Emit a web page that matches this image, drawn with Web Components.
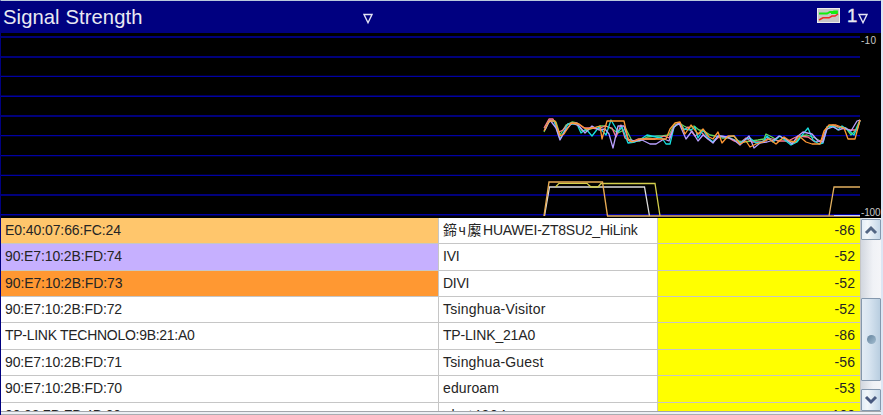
<!DOCTYPE html>
<html lang="en"><head><meta charset="utf-8"><title>Signal Strength</title>
<style>html,body{margin:0;width:883px;height:415px;overflow:hidden;background:#dce6f4;font-family:"Liberation Sans","Noto Sans CJK SC",sans-serif}</style></head>
<body><signal-monitor></signal-monitor>
<script>
class FitText extends HTMLElement{
 connectedCallback(){
  const r=this.attachShadow({mode:'open'});
  r.innerHTML='<style>:host{display:inline-block;white-space:nowrap}span{display:inline-block}</style><span><slot></slot></span>';
  const s=r.querySelector('span'),w=+this.getAttribute('w');
  if(w)s.style.letterSpacing=((w-s.getBoundingClientRect().width)/this.textContent.length)+'px';
 }
}
class SignalTitle extends HTMLElement{
 constructor(){super();this.attachShadow({mode:'open'}).innerHTML=`
 <style>:host{display:grid;grid-template-columns:360px 1fr auto;align-items:start;height:32px;background:#000080;color:#e9e9f2;padding:0 13px 0 2px;box-sizing:border-box;font-size:20.2px;line-height:32px}
 .mark{padding-top:12px;display:block}.tools{display:flex}.g{margin:7px 7px 0 0}.n{font-size:18.5px;line-height:29px;-webkit-text-stroke:.4px #e9e9f2;width:9px}.d{margin:12px 0 0 2px}
 svg{display:block}</style>
 <fit-text w="139.5">Signal Strength</fit-text>
 <span class="mark"><svg width="10" height="12"><path d="M1 1.5H9L5 9.7Z" fill="none" stroke="#e4e4f4" stroke-width="1.4"/></svg></span>
 <span class="tools"><svg class="g" width="23" height="15"><rect x=".5" y=".5" width="22" height="14" fill="#c6c6c6" stroke="#ececec"/><path d="M2 5.5H10L13 4H16L17 3.4H20L20 5H14" fill="none" stroke="#10ee10" stroke-width="1.8"/><path d="M2 12L6 9.8H12L15 8H18L21 6" fill="none" stroke="#f02828" stroke-width="1.5"/></svg>
 <span class="n">1</span><svg class="d" width="10" height="12"><path d="M1 1.5H9L5 9.7Z" fill="none" stroke="#e4e4f4" stroke-width="1.4"/></svg></span>`}
}
class SignalChart extends HTMLElement{
 constructor(){super();
 const grid=[37,57,76.4,96.3,116,135.6,155.6,175.4,195,214.8].map(y=>`<path d="M0 ${y}H860" stroke="#0000a4" stroke-width="1.4"/>`).join('');
 const L=(c,p)=>`<polyline points="${p}" fill="none" stroke="${c}" stroke-width="1.3"/>`;
 this.attachShadow({mode:'open'}).innerHTML=`<style>:host{display:block;height:185px;background:#000}svg{display:block}text{font-size:10px;fill:#c8c8c8}</style>
 <svg width="880" height="185" viewBox="1 33 880 185">${grid}
 <g stroke-linejoin="round">
 ${L('#60d860','544,132 548,123 552,120 556,122 560,135 566,125 572,122 577,123 582,131 588,130 594,128 600,126 606,126 612,129 618,133 626,129 632,141 640,141 647,137 657,136 662,136 669,135 674,125 679,123 684,126 688,128 694,126 699,130 704,131 710,135 715,136 722,138 730,138 738,141 744,142 751,141 758,140 764,139 766,134 772,137 778,141 784,138 791,143 796,142 801,136 807,135 815,138 822,142 826,130 832,126 838,127 846,128 851,135 855,131 860,120')}
 ${L('#ff7890','544,128 549,119 553,119 559,132 563,130 568,124 577,123 584,128 592,128 598,129 605,126 612,128 616,137 621,125 625,138 631,142 638,139 646,139 655,139 664,136 669,138 674,127 679,123 684,130 688,127 695,136 701,132 708,139 713,142 720,136 727,137 734,141 740,143 746,138 752,142 761,142 769,138 778,141 788,141 798,136 808,137 815,142 822,140 827,127 833,125 841,128 850,130 857,130 860,120')}
 ${L('#18dfdf','545,129 549,121 554,121 560,139 568,124 577,124 581,133 586,129 592,136 599,127 606,135 611,120 618,132 622,127 628,143 635,142 641,139 647,135 656,137 662,138 666,144 670,144 674,127 680,123 684,129 691,130 695,127 698,138 703,130 708,138 713,142 718,136 727,137 734,136 740,143 746,139 750,138 756,143 763,142 767,136 773,142 780,136 786,141 791,145 797,142 803,134 808,128 813,140 819,144 823,143 827,127 833,126 838,130 842,126 848,130 854,135 860,121')}
 ${L('#b8a0ff','545,130 550,120 556,128 560,140 565,131 572,123 579,126 585,133 592,126 599,130 605,129 609,134 613,148 618,126 624,126 628,139 635,141 642,140 650,144 656,144 664,139 669,141 674,127 679,123 686,139 692,131 698,141 703,135 708,139 713,143 718,136 727,137 734,140 740,145 744,141 749,136 754,148 760,143 767,142 774,140 779,136 786,139 792,144 798,136 803,132 812,134 818,141 823,142 827,129 833,127 839,130 845,128 851,131 857,121 860,120')}
 ${L('#ff9834','544,131 549,121 555,121 560,136 564,134 571,123 579,124 586,129 593,128 600,126 602,139 607,121 624,121 628,139 632,142 640,139 650,139 660,139 666,139 670,129 675,123 680,122 685,134 691,125 698,134 703,129 709,137 713,139 718,132 722,143 728,136 734,136 740,144 746,141 750,147 756,144 763,142 769,139 776,144 784,137 790,141 795,142 799,136 806,142 812,144 820,144 824,131 829,125 836,125 844,128 848,139 855,139 860,120')}
 </g>
 <path d="M544.5 216L549.5 187H644.5L649.5 216" fill="none" stroke="#dedede" stroke-width="1.3"/>
 <path d="M555.5 187L559 183.3H587L591 187H598L601 183.5H655L660 216" fill="none" stroke="#d4cf4c" stroke-width="1.3"/>
 <path d="M544 216L549 182H602.5L607.5 216" fill="none" stroke="#e7ab54" stroke-width="1.4"/>
 <path d="M607 216H829L834 187H860M829 216H860" fill="none" stroke="#e2b060" stroke-width="1.3"/><path d="M834 215.5H860" stroke="#c8cfff"/>
 <text x="861" y="43.6" textLength="15">-10</text><text x="861" y="215.8" textLength="19.5">-100</text></svg>`}
}
class SignalRow extends HTMLElement{
 connectedCallback(){this.attachShadow({mode:'open'}).innerHTML=`
 <style>:host{display:grid;grid-template-columns:438px 218.5px 1fr;height:26.36px;flex:none;box-sizing:border-box;border-bottom:1.6px solid #c6c6c6;font-size:14px;line-height:24px;color:#252525}
 div{padding-left:4px;white-space:nowrap;overflow:hidden;box-sizing:border-box;border-right:1.6px solid #c6c6c6}.a{background:${this.getAttribute('bg')||'#fff'}}.b{background:#fff}.c{background:#ff0;text-align:right;padding-right:5px}</style>
 <div class="a"><slot name="mac"></slot></div><div class="b"><slot name="ssid"></slot></div><div class="c"><slot name="dbm"></slot></div>`}
}
class SignalTable extends HTMLElement{
 constructor(){super();
 const rows=[['E0:40:07:66:FC:24',116,'鍗ч緳HUAWEI-ZT8SU2_HiLink',0,'-86','#ffc66c'],['90:E7:10:2B:FD:74',117,'IVI',16.5,'-52','#c6b0ff'],['90:E7:10:2B:FD:73',117.5,'DIVI',26,'-52','#ff9832'],['90:E7:10:2B:FD:72',117,'Tsinghua-Visitor',102.5,'-52'],['TP-LINK TECHNOLO:9B:21:A0',189.5,'TP-LINK_21A0',92,'-86'],['90:E7:10:2B:FD:71',117,'Tsinghua-Guest',100.5,'-56'],['90:E7:10:2B:FD:70',117,'eduroam',56,'-53'],['00:08:7B:FB:4B:00',116,'ubnt4804',64,'-100']];
 this.attachShadow({mode:'open'}).innerHTML=`<style>:host{display:flex;flex-direction:column;overflow:hidden;background:#fff}</style>`+rows.map(r=>`<signal-row bg="${r[5]||'#fff'}"><fit-text slot="mac" w="${r[1]}">${r[0]}</fit-text>${r[3]?`<fit-text slot="ssid" w="${r[3]}">${r[2]}</fit-text>`:`<span slot="ssid"><fit-text w="40">${r[2].slice(0,3)}</fit-text><fit-text w="154.5">${r[2].slice(3)}</fit-text></span>`}<fit-text slot="dbm" w="${r[4].length>3?28:20.5}">${r[4]}</fit-text></signal-row>`).join('')}
}
class SignalScroll extends HTMLElement{
 constructor(){super();this.attachShadow({mode:'open'}).innerHTML=`
 <style>:host{display:grid;grid-template-rows:21px 58px 83px 8px 22px;width:20px;background:linear-gradient(90deg,#d2d7df,#f0f2f6 60%,#f4f5f8);padding-top:1px;box-sizing:border-box}
 .b{box-sizing:border-box;border:1.5px solid #8498ad;border-radius:1px;background:linear-gradient(90deg,#e4eef8,#f2f7fb 30%,#c5d8e9);display:grid;place-items:center;min-height:0}.t{background:linear-gradient(90deg,#e3ecf5,#d7e4f0 40%,#b9cee0)}svg{display:block}.k{width:9px;height:9px;border-radius:50%;background:linear-gradient(135deg,#64839c,#a3bdd1)}</style>
 <div class="b"><svg width="14" height="10"><path d="M2 8L7 3L12 8" fill="none" stroke="#526684" stroke-width="3"/></svg></div><i></i><div class="b t"><i class="k"></i></div><i></i><div class="b"><svg width="14" height="10"><path d="M2 2L7 7L12 2" fill="none" stroke="#48597f" stroke-width="3"/></svg></div>`}
}
class SignalMonitor extends HTMLElement{
 constructor(){super();this.attachShadow({mode:'open'}).innerHTML=`
 <style>:host{display:grid;grid-template-rows:32px 185px 192.5px 1fr;width:881px;height:415px;box-sizing:border-box;border-left:1px solid #000080;border-top:1px solid #b9c8dc;border-right:1px solid #7c8ba0;background:#fff}
 .body{display:grid;grid-template-columns:1fr 20px;min-height:0;overflow:hidden}.foot{background:linear-gradient(#a3a6ac 0 1.5px,#eceff4 1.5px 3px,#a9adb2 3px)}</style>
 <signal-title></signal-title><signal-chart></signal-chart><div class="body"><signal-table></signal-table><signal-scroll></signal-scroll></div><div class="foot"></div>`}
}
customElements.define('fit-text',FitText);customElements.define('signal-title',SignalTitle);customElements.define('signal-chart',SignalChart);customElements.define('signal-row',SignalRow);customElements.define('signal-table',SignalTable);customElements.define('signal-scroll',SignalScroll);customElements.define('signal-monitor',SignalMonitor);
</script></body></html>
